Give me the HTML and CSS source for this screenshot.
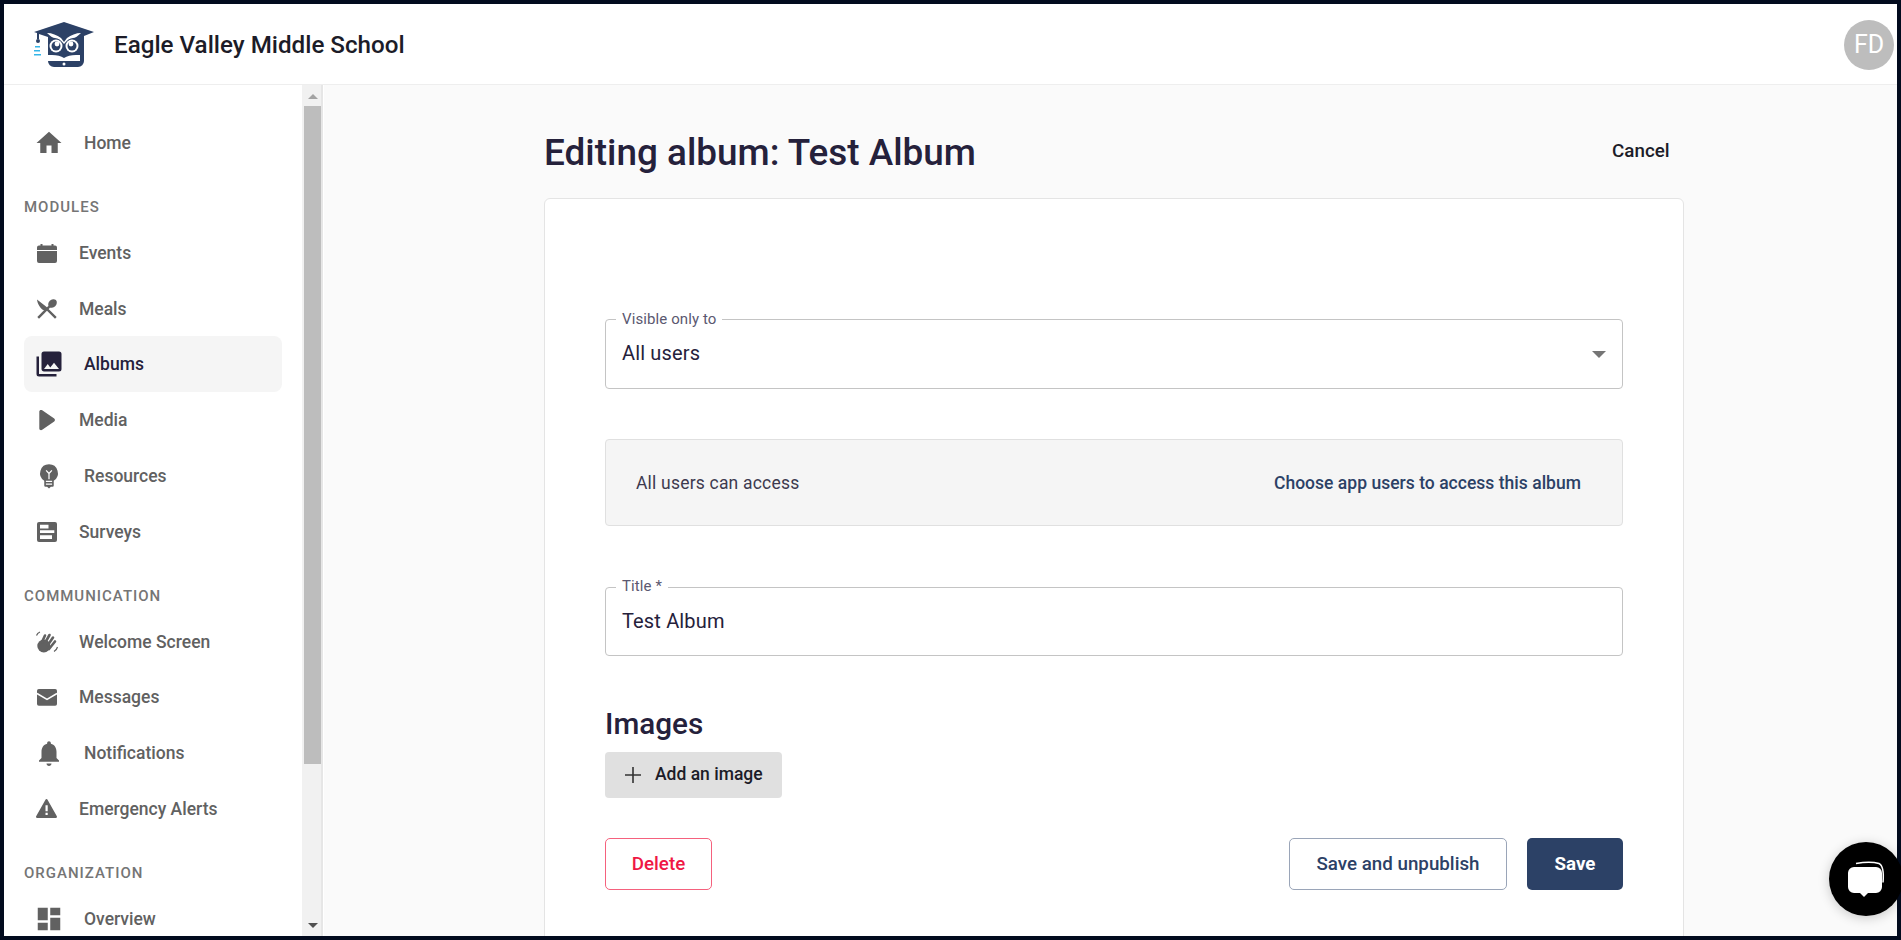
FILE: index.html
```html
<!DOCTYPE html>
<html lang="en">
<head>
<meta charset="utf-8">
<title>Editing album</title>
<link rel="stylesheet" href="styles.css">
</head>
<body>
<div class="frame">
  <header class="topbar">
    <svg class="logo" viewBox="0 0 60 46" aria-hidden="true">
      <path fill="#2c4166" d="M30 0 60 10 50 14V39a6 6 0 0 1-6 6H20a6 6 0 0 1-6-6V15L5 12V17H3V11L0 10Z"/>
      <circle cx="4" cy="19" r="2" fill="#2c4166"/>
      <path fill="#35b5e8" d="M1 24h5v1.6H1zM0 28h6v1.6H0zM0 32h7v1.6H0z"/>
      <path fill="#fff" d="M13 11c5 0 10 2 14 5l3 4 3-4c4-3 9-5 14-5-3 3-6 5-8 5-3 0-6 2-9 6-3-4-6-6-9-6-2 0-5-2-8-5Z"/>
      <circle cx="22" cy="24" r="6.5" fill="#fff"/><circle cx="38" cy="24" r="6.5" fill="#fff"/>
      <circle cx="22" cy="24" r="4.5" fill="#2c4166"/><circle cx="38" cy="24" r="4.5" fill="#2c4166"/>
      <circle cx="23" cy="22" r="2.4" fill="#fff"/><circle cx="37" cy="22" r="2.4" fill="#fff"/>
      <path fill="#fff" d="M18 33c5 0 9 1 12 3 3-2 7-3 12-3h4v6H14v-6Z"/>
      <circle cx="30" cy="42" r="1.5" fill="#fff"/>
    </svg>
    <span class="school">Eagle Valley Middle School</span>
    <span class="avatar">FD</span>
  </header>
  <div class="body">
    <aside class="sidebar">
      <nav class="nav">
        <a class="item first"><svg class="ico big" viewBox="0 0 24 24"><path d="M10 20v-6h4v6h5v-8h3L12 3 2 12h3v8z"/></svg>Home</a>
        <div class="section">MODULES</div>
        <a class="item"><svg class="ico" viewBox="0 0 20 20"><path d="M0 4.500a2 2 0 0 1 2-2h1.500V1h2v1.500h9V1h2v1.500H18a2 2 0 0 1 2 2V7H0zM0 8h20v10a2 2 0 0 1-2 2H2a2 2 0 0 1-2-2z"/></svg>Events</a>
        <a class="item"><svg class="ico" viewBox="0 0 20 20"><ellipse cx="15.500" cy="4.500" rx="4.800" ry="3.800" transform="rotate(-45 15.500 4.500)"/><path d="M11.500 6.800 13.200 8.500 2 19.800 .3 18.100z"/><path d="M0 .5 9 7.500 19.700 18.100 18 19.800 9.500 11.300H7C3.500 10 .5 5 0 .5z"/></svg>Meals</a>
        <a class="item active"><svg class="ico big" viewBox="0 0 24 24"><path d="M22 16V4a2 2 0 0 0-2-2H8a2 2 0 0 0-2 2v12c0 1.100.9 2 2 2h12a2 2 0 0 0 2-2zm-11-4 2 2.700 3-3.700 4 5H8zM2 6v14a2 2 0 0 0 2 2h14v-2H4V6z"/></svg>Albums</a>
        <a class="item"><svg class="ico" viewBox="0 0 20 20"><path d="M2.300 1.500C2.300 0 4-.6 5.200.3L17.200 8.600c1 .7 1 2.200 0 2.900L5.200 19.800C4 20.600 2.300 20 2.300 18.500z"/></svg>Media</a>
        <a class="item"><svg class="ico big" viewBox="0 0 24 24"><path d="M12 2.600a7.100 7.100 0 0 0-3.800 13.100v3.800a1 1 0 0 0 1 1h1.300l1.500 1.500 1.500-1.500h1.300a1 1 0 0 0 1-1v-3.800A7.100 7.100 0 0 0 12 2.600z"/><path class="cut" d="M9.700 7.500 12 10l2.300-2.500M12 10v4.500M9.500 16.300h5M9.500 18.500h5"/></svg>Resources</a>
        <a class="item"><svg class="ico" viewBox="0 0 20 20"><path d="M2 0h16a2 2 0 0 1 2 2v16a2 2 0 0 1-2 2H2a2 2 0 0 1-2-2V2a2 2 0 0 1 2-2z"/><path class="bar" d="M3 2.700h8.500v3.700H3zM3 8.300h14.300v2.800H3zM3 13.200h12v3.700H3z"/></svg>Surveys</a>
        <div class="section">COMMUNICATION</div>
        <a class="item"><svg class="ico" viewBox="0 0 20 20"><circle cx="6.800" cy="14" r="6.500"/><path class="ln" d="M-.5 3.500C0 2 1.500.5 3 0M20.500 15c-.5 2-1.800 3.500-3.500 4.500"/><path class="fin" d="M5 10 8 3.500M8 11 12.500 3M10.500 13.500 16 5.500M12 17 18 9.500"/></svg>Welcome Screen</a>
        <a class="item"><svg class="ico" viewBox="0 0 20 20"><rect y="2" width="20" height="16.700" rx="1.800"/><path class="cut wide" d="M0 6.500 10 12.300 20 6.500"/></svg>Messages</a>
        <a class="item"><svg class="ico big" viewBox="0 0 24 24"><path d="M12 22.400c1.100 0 2-.9 2-2h-4c0 1.100.9 2 2 2zm6-6.400v-5c0-3.070-1.640-5.640-4.500-6.320V4c0-.83-.67-1.500-1.500-1.500s-1.500.67-1.500 1.500v.68C7.630 5.360 6 7.920 6 11v5l-2 2v1h16v-1z"/></svg>Notifications</a>
        <a class="item"><svg class="ico" viewBox="0 0 20 20"><path class="tri" d="M9.500 1.300 18.800 17.800H.2z"/><path class="bar" d="M8.500 6.200h2.200v6H8.500zM8.500 13.800h2.200v2.200H8.500z"/></svg>Emergency Alerts</a>
        <div class="section">ORGANIZATION</div>
        <a class="item"><svg class="ico big" viewBox="0 0 24 24"><path d="M3 13h8V3H3zm0 8h8v-6H3zm10 0h8V11h-8zm0-18v6h8V3z"/></svg>Overview</a>
      </nav>
      <div class="scrollbar">
        <span class="arrow up"></span>
        <div class="track"><span class="thumb"></span></div>
        <span class="arrow down"></span>
      </div>
    </aside>
    <main class="main">
      <div class="content">
        <div class="pagehead">
          <h1>Editing album: Test Album</h1>
          <a class="cancel">Cancel</a>
        </div>
        <section class="card">
          <div class="field select">
            <span class="legend">Visible only to</span>
            <span class="value">All users</span>
            <span class="caret"></span>
          </div>
          <div class="access">
            <span>All users can access</span>
            <a>Choose app users to access this album</a>
          </div>
          <div class="field title">
            <span class="legend">Title *</span>
            <span class="value">Test Album</span>
          </div>
          <h2>Images</h2>
          <button class="add"><svg class="plus" viewBox="0 0 16 16"><path d="M7.200 0h1.600v7.200H16v1.600H8.800V16H7.200V8.800H0V7.200h7.200z"/></svg>Add an image</button>
          <div class="actions">
            <button class="btn delete">Delete</button>
            <button class="btn unpublish">Save and unpublish</button>
            <button class="btn save">Save</button>
          </div>
        </section>
      </div>
    </main>
  </div>
  <div class="chat">
    <svg viewBox="0 0 40 40"><path fill="#fff" d="M8 8h22a6 6 0 0 1 6 6v14a6 6 0 0 1-6 6H22l-4 4-4-4H8a6 6 0 0 1-6-6V14a6 6 0 0 1 6-6z"/><path fill="none" stroke="#fff" stroke-width="1.500" d="M10 4.500C18 3 28 3 33 4.500c4 2 5 8 4 19"/></svg>
  </div>
</div>
</body>
</html>
```
FILE: styles.css
```css
* { box-sizing: border-box; }
html, body { margin: 0; height: 100%; overflow: hidden; }
body { background: #020b1e; font-family: Roboto, "Liberation Sans", sans-serif; color: #25213b; }
.frame { position: relative; height: 940px; padding: 4px; display: flex; flex-direction: column; }
.topbar { height: 81px; flex: none; background: #fff; border-bottom: 1px solid #eeeeee; display: flex; align-items: center; padding: 0 3px 0 30px; }
.logo { width: 60px; height: 46px; margin-top: 2px; }
.school { margin-left: 20px; font-size: 24.200px; font-weight: 500; color: #1c1c28; margin-top: 2px; }
.avatar { margin-left: auto; width: 50px; height: 50px; border-radius: 50%; background: #bdbdbd; color: #fff; display: flex; align-items: center; justify-content: center; font-size: 25px; margin-top: 1px; }
.body { flex: 1; min-height: 0; display: flex; }
.sidebar { width: 320px; flex: none; background: #fff; display: flex; overflow: hidden; }
.nav { flex: 1; padding: 0 20px; min-width: 0; }
.item { display: flex; align-items: center; height: 55.750px; font-size: 17.500px; font-weight: 500; color: #616161; border-radius: 8px; }
.item.first { margin-top: 30px; }
.item.active { background: #f5f5f5; color: #25213b; }
.ico { width: 20px; height: 20px; margin: 0 22px 0 13px; fill: #616161; flex: none; overflow: visible; }
.ico.big { width: 30px; height: 30px; margin: 0 20px 0 10px; }
.active .ico { fill: #25213b; }
.cut { fill: none; stroke: #fff; stroke-width: 1; }
.cut.wide { stroke-width: 1.500; }
.bar { fill: #fff; }
.ln { fill: none; stroke: #616161; stroke-width: 1.200; }
.fin { fill: none; stroke: #616161; stroke-width: 2.600; stroke-linecap: round; }
.tri { stroke: #616161; stroke-width: 2.400; stroke-linejoin: round; }
.section { font-size: 15px; font-weight: 500; letter-spacing: 1px; color: #757575; height: 14px; line-height: 14px; margin: 29.700px 0 10.500px; }
.scrollbar { width: 21px; flex: none; margin-right: 1px; background: #f1f1f1; display: flex; flex-direction: column; align-items: center; border-right: 2px solid #e6e6e6; padding-left: 2px; }
.arrow { width: 0; height: 0; flex: none; border-left: 5px solid transparent; border-right: 5px solid transparent; }
.arrow.up { border-bottom: 5px solid #a3a3a3; margin: 9px 0 7px; }
.arrow.down { border-top: 5px solid #505050; margin: 8px 0; }
.track { flex: 1; width: 100%; }
.thumb { display: block; height: 658px; width: 100%; background: #bdbdbd; }
.main { flex: 1; min-width: 0; background: #fafafa; overflow: hidden; padding-left: 220px; }
.content { width: 1140px; }
.pagehead { display: flex; justify-content: space-between; align-items: center; height: 113px; padding: 22px 14.500px 0 0; }
h1 { margin: 0; font-size: 36.900px; font-weight: 500; color: #25213b; }
.cancel { font-size: 18.750px; font-weight: 480; color: #1c1c28; margin-top: -4px; }
.card { background: #fff; border: 1px solid #e4e4e4; border-radius: 6px; padding: 120px 60px 0; height: 900px; }
.field { position: relative; border: 1px solid #c4c4c4; border-radius: 4px; height: 69px; padding: 0 16px 1px; display: flex; align-items: center; }
.legend { position: absolute; left: 10px; top: -10px; background: #fff; padding: 0 6px; font-size: 15px; letter-spacing: .1px; line-height: 17px; color: #5b5870; }
.value { font-size: 20px; letter-spacing: .15px; color: #25213b; }
.select { height: 70px; padding-bottom: 2px; }
.select .legend { top: -9px; }
.caret { position: absolute; right: 16px; top: 30.500px; width: 0; height: 0; border-left: 7px solid transparent; border-right: 7px solid transparent; border-top: 7px solid #757575; }
.access { margin-top: 50px; height: 87px; background: #f5f5f5; border: 1px solid #e0e0e0; border-radius: 4px; display: flex; align-items: center; justify-content: space-between; padding: 0 41px 0 30px; font-size: 17.500px; letter-spacing: .2px; color: #3d3a4f; }
.access a { font-weight: 480; letter-spacing: .02px; color: #2c4166; }
.title { margin-top: 61px; }
h2 { margin: 49px 0 0; font-size: 29.700px; font-weight: 500; line-height: 38px; color: #25213b; }
.add { display: flex; align-items: center; margin-top: 9px; height: 46px; width: 177px; padding: 0 0 2px 20px; border: 0; border-radius: 4px; background: #e0e0e0; font: 480 17.500px Roboto, sans-serif; color: #1c1c28; }
.plus { width: 16px; height: 16px; margin: 2px 14px 0 0; fill: #333; }
.actions { display: flex; margin-top: 40px; }
.btn { height: 52px; border-radius: 5px; font: 480 18.750px Roboto, sans-serif; }
.delete { width: 107px; background: #fff; border: 1px solid #f5617d; color: #ef1744; margin-right: auto; }
.unpublish { width: 218px; background: #fff; border: 1px solid #9aa5b8; color: #2c4166; margin-right: 20px; }
.save { width: 96px; background: #2c4166; border: 0; color: #fff; font-weight: 700; }
.chat { position: absolute; left: 1829px; top: 842px; width: 74px; height: 74px; border-radius: 50%; background: #000; box-shadow: 0 2px 12px rgba(0,0,0,.2); display: flex; align-items: center; justify-content: center; }
.chat svg { width: 40px; height: 40px; }
```
